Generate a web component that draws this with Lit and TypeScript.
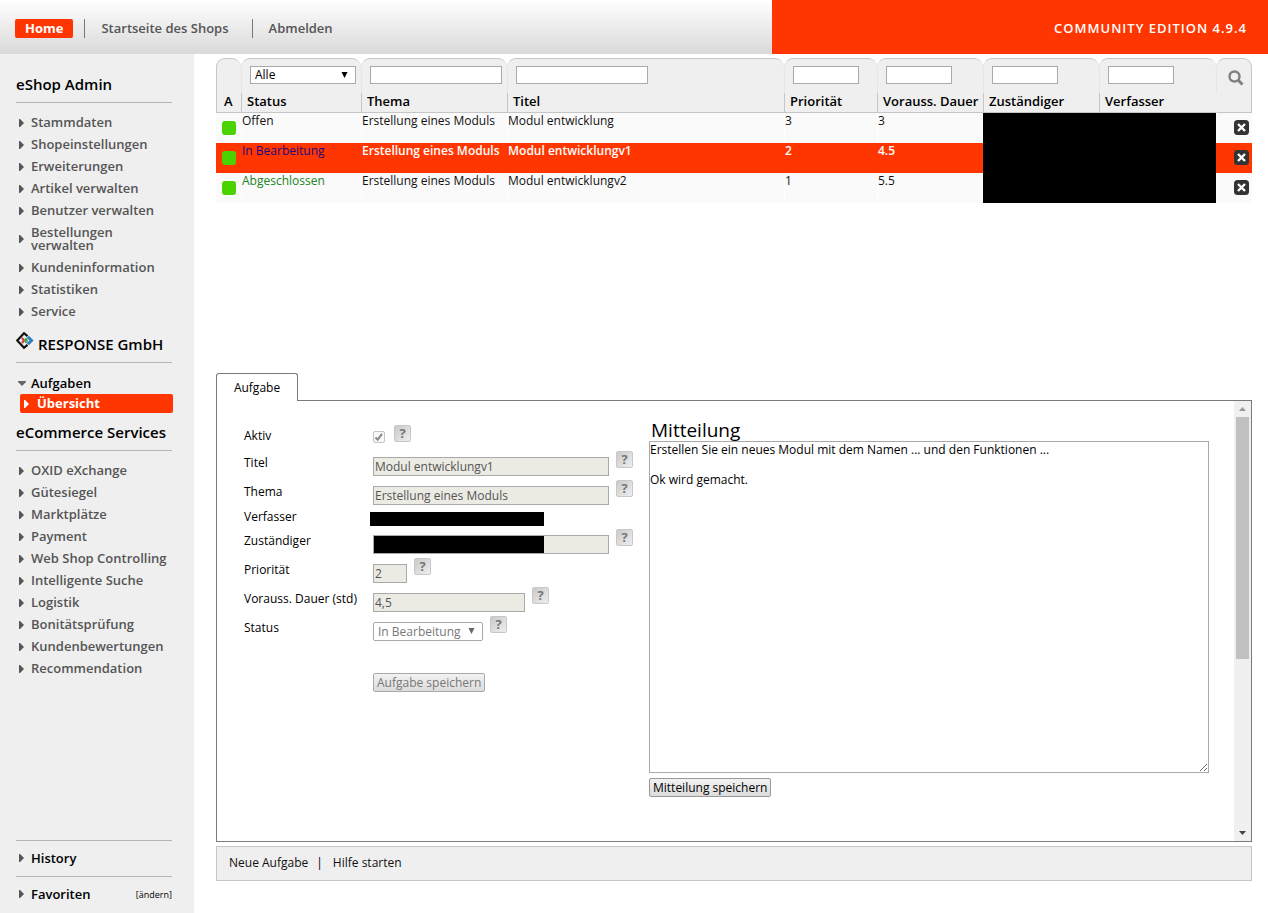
import { LitElement, html, css } from "lit";
import { customElement, state } from "lit/decorators.js";
import { classMap } from "lit/directives/class-map.js";

interface Task {
  status: string;
  tone: string;
  topic: string;
  title: string;
  priority: string;
  hours: string;
}

const ADMIN_LINKS = [
  "Stammdaten", "Shopeinstellungen", "Erweiterungen", "Artikel verwalten", "Benutzer verwalten",
  "Bestellungen verwalten", "Kundeninformation", "Statistiken", "Service",
];

const SERVICE_LINKS = [
  "OXID eXchange", "Gütesiegel", "Marktplätze", "Payment", "Web Shop Controlling",
  "Intelligente Suche", "Logistik", "Bonitätsprüfung", "Kundenbewertungen", "Recommendation",
];

const TASKS: Task[] = [
  { status: "Offen", tone: "open", topic: "Erstellung eines Moduls", title: "Modul entwicklung", priority: "3", hours: "3" },
  { status: "In Bearbeitung", tone: "progress", topic: "Erstellung eines Moduls", title: "Modul entwicklungv1", priority: "2", hours: "4.5" },
  { status: "Abgeschlossen", tone: "done", topic: "Erstellung eines Moduls", title: "Modul entwicklungv2", priority: "1", hours: "5.5" },
];

const arrowRight = html`<svg class="arrow" viewBox="0 0 5 8" aria-hidden="true"><path d="M0 0h1l4 4-4 4H0z" fill="currentColor"/></svg>`;

@customElement("admin-header")
class AdminHeader extends LitElement {
  static styles = css`
    :host { display: grid; grid-template-columns: 1fr 496px; height: 54px; font-size: 13px; font-weight: 600; }
    .bar { display: flex; align-items: center; padding: 3px 0 0 15px; background: linear-gradient(#fff, #d9d9d9); box-sizing: border-box; }
    a { color: #555; text-decoration: none; line-height: 19px; padding: 0 16px; }
    a + a { border-left: 1px solid #777; }
    .home { background: #ff3600; color: #fff; font-weight: 700; border-radius: 2px; padding: 0 10px; margin-right: 11px; }
    .shop { padding-right: 23px; }
    .brand { display: flex; align-items: center; justify-content: flex-end; padding: 2px 21px 0 0; background: #ff3600; color: #fff; letter-spacing: 1px; box-sizing: border-box; }
  `;
  render() {
    return html`
      <nav class="bar">
        <a class="home" href="#home">Home</a>
        <a class="shop" href="#shop">Startseite des Shops</a>
        <a href="#logout">Abmelden</a>
      </nav>
      <div class="brand">COMMUNITY EDITION 4.9.4</div>
    `;
  }
}

@customElement("admin-sidebar")
class AdminSidebar extends LitElement {
  static styles = css`
    :host { display: flex; flex-direction: column; background: #efefef; padding: 11px 22px 1px 16px; font-size: 13px; font-weight: 600; box-sizing: border-box; }
    h2 { display: flex; align-items: center; gap: 4px; height: 37px; margin: 0; font-size: 15px; font-weight: 600; color: #000; white-space: nowrap; }
    .logo { width: 18px; height: 18px; margin-bottom: 6px; }
    ul { list-style: none; margin: 0; padding: 8px 0 3px; border-top: 1px solid #b5b5b5; }
    .expanded { padding: 9px 0 0; }
    a { display: flex; align-items: center; gap: 7px; padding: 5px 8px 4px 3px; line-height: 13px; color: #555; text-decoration: none; }
    .long { padding-right: 0; white-space: nowrap; }
    .arrow { flex: none; width: 5px; height: 8px; color: #555; }
    .down { flex: none; width: 8px; height: 5px; margin: 0 -2px 0 -1px; color: #666; }
    .strong { color: #000; }
    .current { margin: 0 -1px 0 4px; padding: 3px 4px; gap: 8px; background: #ff3600; color: #fff; border-radius: 2px; font-weight: 700; }
    .current .arrow { color: #fff; }
    .foot { margin-top: auto; }
    .entry { display: flex; align-items: center; justify-content: space-between; height: 36px; box-sizing: border-box; border-top: 1px solid #b5b5b5; }
    .entry a { padding: 4px 0 5px 3px; }
    .entry .edit { padding-left: 0; font-size: 9px; font-weight: 400; color: #000; }
  `;
  private links(names: string[]) {
    return names.map((name) => html`<li><a class=${name.length === 20 ? "long" : ""} href="#">${arrowRight}${name}</a></li>`);
  }
  render() {
    return html`
      <h2>eShop Admin</h2>
      <ul>${this.links(ADMIN_LINKS)}</ul>
      <h2>
        <svg class="logo" viewBox="0 0 18 18" fill="none" stroke-width="2.200" aria-hidden="true">
          <path d="M11.500 4.200 8 1.200 1.200 8.500 8 15.800l3.500-3" stroke="#111"/>
          <path d="M11.800 4.800l3.700 3.700-3.700 3.700" stroke="#2f7fc4" stroke-width="3"/>
          <path d="M6 6l2 2.500L6 11" stroke="#e03a3a"/>
          <path d="M10 6v5M8.500 8.500h3.500" stroke="#3dae5a"/>
        </svg>
        RESPONSE GmbH
      </h2>
      <ul class="expanded">
        <li><a class="strong" href="#"><svg class="down" viewBox="0 0 8 5" aria-hidden="true"><path d="M0 0h8v1L4 5 0 1z" fill="currentColor"/></svg>Aufgaben</a></li>
        <li><a class="current" href="#">${arrowRight}Übersicht</a></li>
      </ul>
      <h2>eCommerce Services</h2>
      <ul>${this.links(SERVICE_LINKS)}</ul>
      <div class="foot">
        <div class="entry"><a class="strong" href="#">${arrowRight}History</a></div>
        <div class="entry"><a class="strong" href="#">${arrowRight}Favoriten</a><a class="edit" href="#">[ändern]</a></div>
      </div>
    `;
  }
}

@customElement("task-list")
class TaskList extends LitElement {
  @state() private selected = 1;
  static styles = css`
    :host { display: block; font-size: 12px; }
    table { width: 100%; table-layout: fixed; border-collapse: separate; border-spacing: 0; }
    td, th { padding: 0; text-align: left; white-space: nowrap; }
    .c-a { width: 25px; } .c-status { width: 120px; } .c-topic { width: 146px; } .c-prio { width: 93px; }
    .c-hours { width: 106px; } .c-owner { width: 116px; } .c-author { width: 117px; } .c-tools { width: 36px; }
    .cap { height: 35px; padding: 7px 8px 0; background: #efefef; border: solid #e6e6e6; border-width: 1px 0 0 1px; border-top-color: #c6c6c6; border-radius: 9px 9px 0 0; box-sizing: border-box; }
    .cap-first { border-left-color: #c6c6c6; }
    .cap-last { border-right: 1px solid #c6c6c6; padding: 10px 0 0 10px; }
    .field { display: block; width: 132px; height: 18px; margin: 0; padding: 0 4px; box-sizing: border-box; border: 1px solid #a9a9a9; border-radius: 0; background: #fff; font: inherit; color: #000; }
    .short { width: 66px; }
    .pick { position: relative; width: 106px; }
    .pick select { appearance: none; width: 106px; line-height: 16px; }
    .pick svg { position: absolute; right: 8px; top: 6px; width: 7px; height: 6px; pointer-events: none; }
    .search { display: block; padding: 0; border: 0; background: none; }
    .search svg { display: block; width: 17px; height: 17px; }
    th { height: 20px; padding: 0 0 3px 5px; background: #efefef; border-left: 1px solid #c6c6c6; border-bottom: 1px solid #c6c6c6; font-weight: 600; line-height: 15px; font-size: 13px; box-sizing: border-box; }
    .th-a { padding-left: 7px; }
    .th-tools { border-left-color: #efefef; border-right: 1px solid #c6c6c6; }
    tbody td { height: 30px; box-sizing: border-box; vertical-align: top; line-height: 15px; background: #fafafa; border-left: 1px solid #fff; color: #111; }
    tbody td.first { border-left-color: #fafafa; }
    .selected td, .selected td.first { background: #ff3600; border-left-color: #ff3600; color: #fff; font-weight: 600; }
    .selected .progress { color: #1c0a80; font-weight: 400; }
    tbody .done { color: #1b841b; }
    tbody .masked, .selected .masked { background: #000; border-left-color: #000; }
    .dot { display: block; width: 14px; height: 14px; margin: 8px 0 0 5px; border-radius: 3px; background: #4ad300; }
    .remove { display: block; margin: 7px 0 0 17px; padding: 0; border: 0; background: none; }
    .remove svg { display: block; width: 15px; height: 15px; }
  `;
  private filter(name: string, short = false) {
    return html`<td><div class="cap"><input class=${classMap({ field: true, short })} type="text" aria-label=${name}></div></td>`;
  }
  render() {
    return html`
      <table>
        <colgroup>
          <col class="c-a"><col class="c-status"><col class="c-topic"><col><col class="c-prio">
          <col class="c-hours"><col class="c-owner"><col class="c-author"><col class="c-tools">
        </colgroup>
        <thead>
          <tr>
            <td><div class="cap cap-first"></div></td>
            <td><div class="cap"><div class="pick">
              <select class="field" aria-label="Status"><option>Alle</option></select>
              <svg viewBox="0 0 7 6" aria-hidden="true"><path d="M.5 0h6l-3 6z"/></svg>
            </div></div></td>
            ${this.filter("Thema")}${this.filter("Titel")}${this.filter("Priorität", true)}
            ${this.filter("Vorauss. Dauer", true)}${this.filter("Zuständiger", true)}${this.filter("Verfasser", true)}
            <td><div class="cap cap-last"><button class="search" aria-label="Suchen">
              <svg viewBox="0 0 17 17" fill="none" stroke="#808080" aria-hidden="true"><circle cx="7.500" cy="7.500" r="5" stroke-width="2.400"/><path d="M11 11l4.500 4.500" stroke-width="3"/></svg>
            </button></div></td>
          </tr>
          <tr>
            <th class="th-a">A</th><th>Status</th><th>Thema</th><th>Titel</th><th>Priorität</th>
            <th>Vorauss. Dauer</th><th>Zuständiger</th><th>Verfasser</th><th class="th-tools"></th>
          </tr>
        </thead>
        <tbody>
          ${TASKS.map((t, i) => html`
            <tr class=${i === this.selected ? "selected" : ""} @click=${() => (this.selected = i)}>
              <td class="first"><span class="dot"></span></td>
              <td class=${t.tone}>${t.status}</td>
              <td>${t.topic}</td><td>${t.title}</td><td>${t.priority}</td><td>${t.hours}</td>
              <td class="masked"></td><td class="masked"></td>
              <td class="first"><button class="remove" aria-label="Löschen">
                <svg viewBox="0 0 15 15" aria-hidden="true"><rect width="15" height="15" rx="3.500" fill="#333"/><path d="M4 4l7 7M11 4l-7 7" stroke="#fff" stroke-width="2.400"/></svg>
              </button></td>
            </tr>`)}
        </tbody>
      </table>
    `;
  }
}

@customElement("task-editor")
class TaskEditor extends LitElement {
  static styles = css`
    :host { display: block; font-size: 12px; color: #000; }
    .tab { display: block; position: relative; min-width: 82px; height: 28px; margin: 0 0 -1px; padding: 0 14px; border: 1px solid #7a7a7a; border-bottom: 0; border-radius: 3px 3px 0 0; background: #fff; color: #000; font: inherit; font-size: 12px; line-height: 27px; box-sizing: border-box; }
    .panel { display: flex; border: 1px solid #7a7a7a; box-sizing: border-box; min-height: 442px; }
    .body { flex: 1; display: flex; padding: 18px 25px 44px 27px; min-width: 0; }
    form { flex: none; width: 405px; padding-top: 6px; box-sizing: border-box; }
    .row { display: flex; align-items: flex-start; height: 29px; }
    .first { height: 26px; }
    .compact { height: 20px; }
    label, .label { flex: none; width: 129px; line-height: 23px; }
    .first label { line-height: 22px; }
    .compact .label { line-height: 15px; }
    .field { width: 236px; height: 19px; margin: 6px 0 0; padding: 0 1px; border: 1px solid #a9a9a9; border-radius: 0; background: #ebebe4; color: #555; font: inherit; box-sizing: border-box; }
    .tiny { width: 34px; }
    .mid { width: 152px; }
    .hidden-name { background: linear-gradient(90deg, #000 170px, #ebebe4 170px); }
    .bar { width: 174px; height: 14px; margin: 3px 0 0 -3px; background: #000; }
    .check { appearance: none; width: 12px; height: 12px; margin: 6px 2px 0 0; border: 1px solid #c4c4c4; border-radius: 2px; background: #f8f8f8; box-sizing: border-box; }
    .tick { position: relative; display: flex; }
    .tick svg { position: absolute; left: 2px; top: 8px; width: 8px; height: 8px; pointer-events: none; }
    .help { flex: none; width: 17px; height: 17px; margin-left: 7px; padding: 0; border: 1px solid #c8c8c8; border-radius: 2px; background: linear-gradient(135deg, #cacaca, #eee); color: #777; font: inherit; font-size: 13px; font-weight: 700; line-height: 15px; }
    .pick { position: relative; }
    .pick select { appearance: none; width: 110px; padding: 0 4px; background: #fff; color: #777; border-radius: 2px; opacity: 1; }
    .pick svg { position: absolute; right: 8px; top: 12px; width: 7px; height: 6px; fill: #666; pointer-events: none; }
    .save { height: 19px; margin: 28px 0 0 129px; padding: 0 3px; border: 1px solid #999; border-radius: 2px; background: linear-gradient(#f2f2f2, #dcdcdc); font: inherit; line-height: 17px; box-sizing: border-box; color: #000; }
    .save:disabled { color: #777; border-color: #a9a9a9; }
    .message { flex: 1; display: flex; flex-direction: column; align-items: flex-start; min-width: 0; }
    .message .title { width: auto; padding-left: 2px; font-size: 19px; line-height: 22px; }
    textarea { flex: 1; display: block; width: 100%; min-height: 332px; margin: 0; padding: 0; border: 1px solid #a9a9a9; font: inherit; line-height: 15px; color: #000; box-sizing: border-box; resize: both; outline: 0; }
    .message .save { margin: 5px 0 0; }
    .rail { flex: none; display: flex; flex-direction: column; align-items: center; width: 17px; background: #f0f0f0; }
    .rail svg { width: 7px; height: 4px; margin: 6px 0; }
    .thumb { flex: 241; width: 13px; background: #c0c0c0; }
    .rest { flex: 166; }
  `;
  private help() {
    return html`<button class="help" type="button" aria-label="Hilfe">?</button>`;
  }
  private text(id: string, label: string, value: string, kind = "") {
    return html`<div class="row"><label for=${id}>${label}</label><input id=${id} class="field ${kind}" type="text" .value=${value} disabled>${this.help()}</div>`;
  }
  render() {
    return html`
      <button class="tab">Aufgabe</button>
      <div class="panel">
        <div class="body">
          <form>
            <div class="row first"><label for="active">Aktiv</label>
              <span class="tick"><input id="active" class="check" type="checkbox" checked disabled>
                <svg viewBox="0 0 8 8" fill="none" stroke="#888" stroke-width="2" aria-hidden="true"><path d="M.5 4.500l2.200 2.200L7 .8"/></svg></span>
              ${this.help()}</div>
            ${this.text("title", "Titel", "Modul entwicklungv1")}
            ${this.text("topic", "Thema", "Erstellung eines Moduls")}
            <div class="row compact"><span class="label">Verfasser</span><span class="bar"></span></div>
            ${this.text("owner", "Zuständiger", "", "hidden-name")}
            ${this.text("prio", "Priorität", "2", "tiny")}
            ${this.text("hours", "Vorauss. Dauer (std)", "4,5", "mid")}
            <div class="row"><label for="status">Status</label>
              <span class="pick"><select id="status" class="field" disabled><option>In Bearbeitung</option></select>
                <svg viewBox="0 0 7 6" aria-hidden="true"><path d="M.5 0h6l-3 6z"/></svg></span>
              ${this.help()}</div>
            <button class="save" type="button" disabled>Aufgabe speichern</button>
          </form>
          <div class="message">
            <label class="title" for="note">Mitteilung</label>
            <textarea id="note" .value=${"Erstellen Sie ein neues Modul mit dem Namen ... und den Funktionen ...\n\nOk wird gemacht."}></textarea>
            <button class="save" type="button">Mitteilung speichern</button>
          </div>
        </div>
        <div class="rail" aria-hidden="true">
          <svg viewBox="0 0 7 4"><path d="M3.500 0 7 4H0z" fill="#999"/></svg>
          <div class="thumb"></div>
          <div class="rest"></div>
          <svg viewBox="0 0 7 4"><path d="M0 0h7L3.500 4z" fill="#444"/></svg>
        </div>
      </div>
    `;
  }
}

@customElement("app-root")
class AppRoot extends LitElement {
  static styles = css`
    :host { display: flex; flex-direction: column; min-height: 100vh; background: #fff; font-family: "Open Sans", "Noto Sans", sans-serif; color: #000; }
    .page { flex: 1; display: grid; grid-template-columns: 194px 1fr; }
    main { display: grid; grid-template-rows: 1fr auto auto; padding: 4px 16px 32px 22px; min-width: 0; }
    .actions { display: flex; align-items: center; height: 35px; margin-top: 4px; padding: 0 12px; box-sizing: border-box; background: #efefef; border: 1px solid #c6c6c6; font-size: 12px; }
    .actions a { color: #111; text-decoration: none; padding-bottom: 2px; }
    .sep { padding: 0 10px 2px 8px; }
  `;
  render() {
    return html`
      <admin-header></admin-header>
      <div class="page">
        <admin-sidebar></admin-sidebar>
        <main>
          <task-list></task-list>
          <task-editor></task-editor>
          <div class="actions"><a href="#new">Neue Aufgabe</a><span class="sep">|</span><a href="#help">Hilfe starten</a></div>
        </main>
      </div>
    `;
  }
}
